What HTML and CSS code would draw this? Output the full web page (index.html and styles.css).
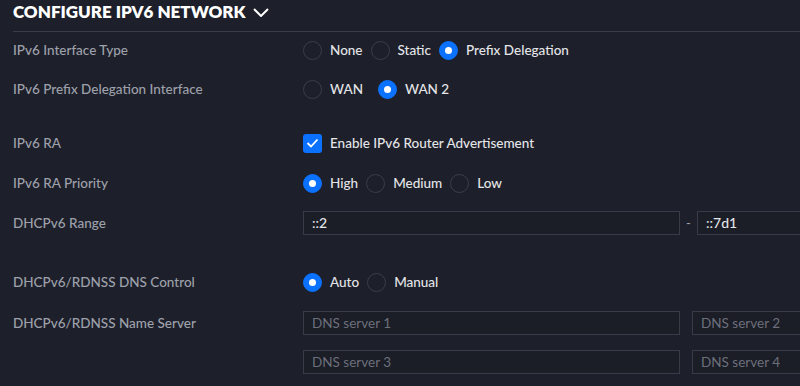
FILE: index.html
```html
<!DOCTYPE html>
<html lang="en">
<head>
    <meta charset="UTF-8">
    <title>Configure IPv6 Network</title>
    <link rel="stylesheet" href="styles.css">
</head>
<body>
    <div class="panel">
        <h2 class="panel-title">
            CONFIGURE IPV6 NETWORK
            <svg class="chevron" width="16" height="9" viewBox="0 0 16 9"><path d="M1 1 L8 8 L15 1" fill="none" stroke="#fff" stroke-width="2"/></svg>
        </h2>

        <div class="row first">
            <div class="label">IPv6 Interface Type</div>
            <div class="options">
                <span class="radio"></span><span class="opt">None</span>
                <span class="radio"></span><span class="opt">Static</span>
                <span class="radio checked"></span><span class="opt">Prefix Delegation</span>
            </div>
        </div>
        <div class="row tight">
            <div class="label">IPv6 Prefix Delegation Interface</div>
            <div class="options">
                <span class="radio"></span><span class="opt wan">WAN</span>
                <span class="radio checked"></span><span class="opt">WAN 2</span>
            </div>
        </div>

        <div class="row spaced">
            <div class="label">IPv6 RA</div>
            <div class="options">
                <span class="checkbox">
                    <svg width="13" height="10" viewBox="0 0 13 10"><path d="M1.5 5 L5 8.5 L11.5 1.5" fill="none" stroke="#fff" stroke-width="1.8"/></svg>
                </span>
                <span class="opt">Enable IPv6 Router Advertisement</span>
            </div>
        </div>
        <div class="row">
            <div class="label">IPv6 RA Priority</div>
            <div class="options">
                <span class="radio checked"></span><span class="opt">High</span>
                <span class="radio"></span><span class="opt">Medium</span>
                <span class="radio"></span><span class="opt">Low</span>
            </div>
        </div>
        <div class="row">
            <div class="label">DHCPv6 Range</div>
            <div class="inputs">
                <div class="field">::2</div>
                <span class="dash">-</span>
                <div class="field">::7d1</div>
            </div>
        </div>

        <div class="row spaced-lg">
            <div class="label">DHCPv6/RDNSS DNS Control</div>
            <div class="options">
                <span class="radio checked"></span><span class="opt">Auto</span>
                <span class="radio"></span><span class="opt">Manual</span>
            </div>
        </div>
        <div class="row loose">
            <div class="label">DHCPv6/RDNSS Name Server</div>
            <div class="inputs wide">
                <div class="field placeholder">DNS server 1</div>
                <div class="field placeholder">DNS server 2</div>
            </div>
        </div>
        <div class="row tight">
            <div class="label"></div>
            <div class="inputs wide">
                <div class="field placeholder">DNS server 3</div>
                <div class="field placeholder">DNS server 4</div>
            </div>
        </div>
    </div>
</body>
</html>
```

FILE: styles.css
```css
body {
    margin: 0;
    background-color: #1d1f2a;
    font-family: Lato, "Open Sans", sans-serif;
    overflow: hidden;
    width: 800px;
    height: 386px;
}
.panel {
    padding-left: 13px;
}
.panel-title {
    margin: 0;
    height: 31px;
    border-bottom: 1px solid #3a3d4a;
    color: #fff;
    font-size: 17px;
    font-weight: 800;
    line-height: 24px;
    display: flex;
    align-items: flex-start;
    white-space: nowrap;
}
.chevron {
    margin-left: 7px;
    margin-top: 8px;
}
.row {
    display: flex;
    align-items: center;
    height: 24px;
    margin-top: 16px;
    white-space: nowrap;
}
.row.first {
    margin-top: 6px;
}
.row.tight {
    margin-top: 15px;
}
.row.loose {
    margin-top: 17px;
}
.row.spaced {
    margin-top: 30px;
}
.row.spaced-lg {
    margin-top: 35px;
}
.label {
    width: 290px;
    flex: none;
    color: #9ea1ab;
    font-size: 13.5px;
    font-weight: 500;
}
.options {
    display: flex;
    align-items: center;
}
.radio {
    width: 17px;
    height: 17px;
    border: 1px solid #3b3e4a;
    border-radius: 50%;
    box-sizing: content-box;
    margin-right: 8px;
    position: relative;
}
.radio.checked {
    background: #0b72ff;
    border-color: #0b72ff;
}
.radio.checked::after {
    content: "";
    position: absolute;
    left: 5px;
    top: 5px;
    width: 7px;
    height: 7px;
    border-radius: 50%;
    background: #fff;
}
.checkbox {
    width: 19px;
    height: 19px;
    border-radius: 3px;
    background: #0b72ff;
    margin-right: 8px;
    display: flex;
    align-items: center;
    justify-content: center;
}
.opt {
    color: #e4e5e8;
    font-size: 13.5px;
    font-weight: 500;
    margin-right: 8px;
}
.opt.wan {
    margin-right: 15px;
}
.inputs {
    display: flex;
    align-items: center;
}
.field {
    width: 377px;
    height: 24px;
    flex: none;
    box-sizing: border-box;
    border: 1px solid #383c48;
    background: #1b1d27;
    color: #e4e5e8;
    font-size: 14px;
    font-weight: 500;
    line-height: 22px;
    padding-left: 8px;
}
.field.placeholder {
    color: #6c707b;
    font-size: 13.5px;
    font-weight: 400;
}
.dash {
    color: #9ea1ab;
    font-size: 13px;
    width: 17px;
    text-align: center;
}
.inputs.wide {
    gap: 12px;
}
```
